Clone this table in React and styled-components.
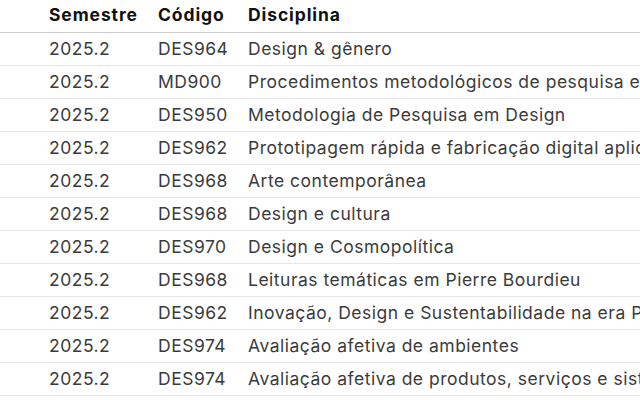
import React from "react";
import styled, { createGlobalStyle } from "styled-components";

const Global = createGlobalStyle`
  html, body { margin: 0; padding: 0; background: #fff; overflow: hidden; }
  body { font-family: Inter, "Noto Sans", sans-serif; }
`;

const Table = styled.div`
  width: 640px;
  height: 400px;
  overflow: hidden;
  display: flex;
  flex-direction: column;
`;

const Row = styled.div`
  display: grid;
  grid-template-columns: 158px 90px 1fr;
  height: 33px;
  box-sizing: border-box;
  align-items: center;
  border-bottom: ${(p) => (p.$head ? "1.5px solid #cdcdcd" : "1px solid #e6e6e6")};
  white-space: nowrap;
  flex-shrink: 0;
`;

const Cell = styled.div`
  font-size: 17.5px;
  font-weight: ${(p) => (p.$head ? 700 : 400)};
  letter-spacing: ${(p) => (p.$head ? 0.9 : 0.5)}px;
  color: ${(p) => (p.$head ? "#111" : "#3b3b3b")};
  padding-left: ${(p) => (p.$first ? 49 : 0)}px;
  padding-bottom: ${(p) => (p.$head ? 3 : 1)}px;
`;

const rows = [
  ["DES964", "Design & gênero"],
  ["MD900", "Procedimentos metodológicos de pesquisa em design"],
  ["DES950", "Metodologia de Pesquisa em Design"],
  ["DES962", "Prototipagem rápida e fabricação digital aplicada ao design"],
  ["DES968", "Arte contemporânea"],
  ["DES968", "Design e cultura"],
  ["DES970", "Design e Cosmopolítica"],
  ["DES968", "Leituras temáticas em Pierre Bourdieu"],
  ["DES962", "Inovação, Design e Sustentabilidade na era Pós-Industrial"],
  ["DES974", "Avaliação afetiva de ambientes"],
  ["DES974", "Avaliação afetiva de produtos, serviços e sistemas"],
];

export default function App() {
  return (
    <>
      <Global />
      <Table>
        <Row $head>
          <Cell $head $first>Semestre</Cell>
          <Cell $head>Código</Cell>
          <Cell $head>Disciplina</Cell>
        </Row>
        {rows.map(([code, name], i) => (
          <Row key={i}>
            <Cell $first>2025.2</Cell>
            <Cell>{code}</Cell>
            <Cell>{name}</Cell>
          </Row>
        ))}
      </Table>
    </>
  );
}
